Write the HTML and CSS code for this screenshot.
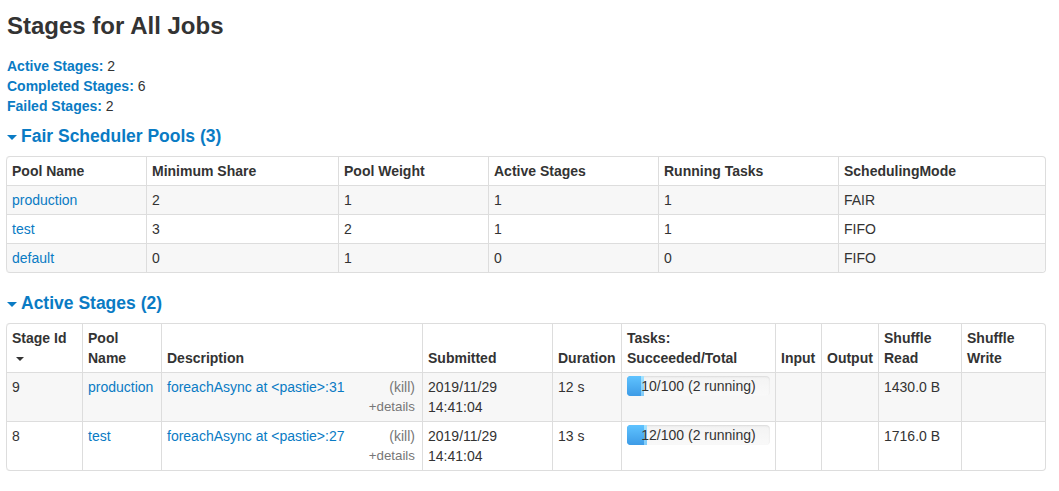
FILE: index.html
```html
<!DOCTYPE html>
<html>
<head>
<meta charset="utf-8">
<title>Stages for All Jobs</title>
<link rel="stylesheet" href="styles.css">
</head>
<body>
<div class="page">
  <h3 class="title">Stages for All Jobs</h3>
  <ul class="summary">
    <li><a href="#active"><strong>Active Stages:</strong></a> 2</li>
    <li><a href="#completed"><strong>Completed Stages:</strong></a> 6</li>
    <li><a href="#failed"><strong>Failed Stages:</strong></a> 2</li>
  </ul>

  <h4 class="section-title"><span class="arrow-open"></span><a href="#pools">Fair Scheduler Pools (3)</a></h4>
  <table class="tbl pools">
    <thead>
      <tr>
        <th class="p1">Pool Name</th>
        <th class="p2">Minimum Share</th>
        <th class="p3">Pool Weight</th>
        <th class="p4">Active Stages</th>
        <th class="p5">Running Tasks</th>
        <th>SchedulingMode</th>
      </tr>
    </thead>
    <tbody>
      <tr><td><a href="#">production</a></td><td>2</td><td>1</td><td>1</td><td>1</td><td>FAIR</td></tr>
      <tr><td><a href="#">test</a></td><td>3</td><td>2</td><td>1</td><td>1</td><td>FIFO</td></tr>
      <tr><td><a href="#">default</a></td><td>0</td><td>1</td><td>0</td><td>0</td><td>FIFO</td></tr>
    </tbody>
  </table>

  <h4 class="section-title second"><span class="arrow-open"></span><a href="#active">Active Stages (2)</a></h4>
  <table class="tbl stages">
    <thead>
      <tr>
        <th class="s1">Stage Id<span class="sort-arrow"><span class="tri"></span></span></th>
        <th class="s2">Pool Name</th>
        <th class="s3">Description</th>
        <th class="s4">Submitted</th>
        <th class="s5 nowrap">Duration</th>
        <th class="s6">Tasks: Succeeded/Total</th>
        <th class="s7 nowrap">Input</th>
        <th class="s8 nowrap">Output</th>
        <th class="s9">Shuffle Read</th>
        <th>Shuffle Write</th>
      </tr>
    </thead>
    <tbody>
      <tr>
        <td>9</td>
        <td><a href="#">production</a></td>
        <td>
          <div class="desc-top"><a href="#">foreachAsync at &lt;pastie&gt;:31</a><span class="kill">(kill)</span></div>
          <div class="details">+details</div>
        </td>
        <td>2019/11/29 14:41:04</td>
        <td>12 s</td>
        <td>
          <div class="progress">
            <span class="progress-label">10/100 (2 running)</span>
            <div class="bar-completed" style="width: 10%"></div>
            <div class="bar-running" style="width: 2%"></div>
          </div>
        </td>
        <td></td>
        <td></td>
        <td>1430.0 B</td>
        <td></td>
      </tr>
      <tr>
        <td>8</td>
        <td><a href="#">test</a></td>
        <td>
          <div class="desc-top"><a href="#">foreachAsync at &lt;pastie&gt;:27</a><span class="kill">(kill)</span></div>
          <div class="details">+details</div>
        </td>
        <td>2019/11/29 14:41:04</td>
        <td>13 s</td>
        <td>
          <div class="progress">
            <span class="progress-label">12/100 (2 running)</span>
            <div class="bar-completed" style="width: 12%"></div>
            <div class="bar-running" style="width: 2%"></div>
          </div>
        </td>
        <td></td>
        <td></td>
        <td>1716.0 B</td>
        <td></td>
      </tr>
    </tbody>
  </table>
</div>
</body>
</html>
```
FILE: styles.css
```css
* {
  box-sizing: border-box;
}

body {
  margin: 0;
  font-family: "Liberation Sans", Arial, Helvetica, sans-serif;
  font-size: 14px;
  line-height: 20px;
  color: #333333;
  background: #ffffff;
}

a {
  color: #0a7bc4;
  text-decoration: none;
}

.page {
  padding-left: 6px;
  width: 1046px;
}

.title {
  margin: 6px 0 0 1px;
  font-size: 24px;
  line-height: 40px;
  font-weight: bold;
  color: #333333;
}

.summary {
  list-style: none;
  margin: 10px 0 0 1px;
  padding: 0;
}

.section-title {
  display: flex;
  align-items: center;
  margin: 10px 0 0 1px;
  font-size: 17.5px;
  line-height: 20px;
  font-weight: bold;
}

.section-title.second {
  margin-top: 20px;
}

.arrow-open {
  display: inline-block;
  width: 0;
  height: 0;
  border-left: 5px solid transparent;
  border-right: 5px solid transparent;
  border-top: 5px solid #0a7bc4;
  margin-right: 4px;
  margin-top: 2px;
}

.tbl {
  width: 1040px;
  margin-top: 10px;
  border-collapse: separate;
  border-spacing: 0;
  border: 1px solid #dddddd;
  border-left: 0;
  border-radius: 4px;
  table-layout: fixed;
}

.tbl th,
.tbl td {
  padding: 4px 5px;
  border-left: 1px solid #dddddd;
  border-top: 1px solid #dddddd;
  text-align: left;
  vertical-align: top;
}

.tbl th {
  font-weight: bold;
  vertical-align: bottom;
}

.tbl thead tr:first-child th {
  border-top: 0;
}

.tbl thead tr:first-child th:first-child {
  border-top-left-radius: 4px;
}

.tbl thead tr:first-child th:last-child {
  border-top-right-radius: 4px;
}

.tbl tbody tr:last-child td:first-child {
  border-bottom-left-radius: 4px;
}

.tbl tbody tr:last-child td:last-child {
  border-bottom-right-radius: 4px;
}

.tbl tbody tr:nth-child(odd) td {
  background-color: #f7f7f7;
}

.nowrap {
  white-space: nowrap;
}

/* pool table column widths */
.pools .p1 { width: 140px; }
.pools .p2 { width: 192px; }
.pools .p3 { width: 150px; }
.pools .p4 { width: 170px; }
.pools .p5 { width: 180px; }

/* stage table column widths */
.stages .s1 { width: 76px; }
.stages .s2 { width: 79px; }
.stages .s3 { width: 261px; }
.stages .s4 { width: 130px; }
.stages .s5 { width: 69px; }
.stages .s6 { width: 154px; }
.stages .s7 { width: 46px; }
.stages .s8 { width: 57px; }
.stages .s9 { width: 83px; }

.sort-arrow {
  display: flex;
  align-items: center;
  height: 20px;
  padding-left: 4px;
}

.tri {
  display: block;
  width: 0;
  height: 0;
  border-left: 4px solid transparent;
  border-right: 4px solid transparent;
  border-top: 4px solid #333333;
  margin-top: 1px;
}

.desc-top {
  display: flex;
  justify-content: space-between;
}

.kill {
  color: #777777;
  margin-right: 2px;
}

.details {
  text-align: right;
  margin-right: 2px;
  color: #777777;
  font-size: 13.33px;
}

.progress {
  position: relative;
  display: flex;
  height: 20px;
  margin-top: -1px;
  border-radius: 4px;
  overflow: hidden;
  background-color: #f5f5f5;
  background-image: linear-gradient(to bottom, #f3f3f3, #f9f9f9);
  box-shadow: inset 0 1px 2px rgba(0, 0, 0, 0.1);
}

.progress-label {
  position: absolute;
  left: 0;
  right: 0;
  top: 0;
  text-align: center;
  line-height: 20px;
  color: #333333;
  white-space: nowrap;
}

.bar-completed {
  height: 100%;
  background-color: #4aa9ee;
  background-image: linear-gradient(to bottom, #5fc3ff, #3d9be6);
}

.bar-running {
  height: 100%;
  background-color: #8fd4ff;
  background-image: linear-gradient(to bottom, #a4e3ff, #7fcaf8);
}
```
